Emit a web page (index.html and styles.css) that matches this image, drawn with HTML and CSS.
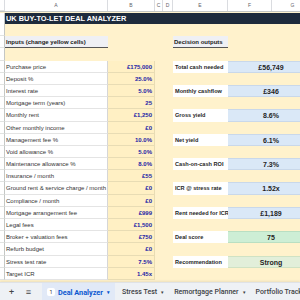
FILE: index.html
```html
<!DOCTYPE html>
<html lang="en">
<head>
    <meta charset="UTF-8">
    <title>UK Buy-to-Let Deal Analyzer</title>
    <link rel="stylesheet" href="styles.css">
</head>
<body>
    <div class="sheet">
        <div class="row col-head">
            <div class="c stub"></div>
            <div class="c">A</div>
            <div class="c">B</div>
            <div class="c">C</div>
            <div class="c">D</div>
            <div class="c">E</div>
            <div class="c split"><span>F</span><span>G</span></div>
        </div>

        <div class="row title-row">
            <div class="c stub"></div>
            <div class="c title">UK BUY-TO-LET DEAL ANALYZER</div>
        </div>

        <div class="row"><div class="c stub"></div></div>

        <div class="row">
            <div class="c stub"></div>
            <div class="c section">Inputs (change yellow cells)</div>
            <div class="c"></div>
            <div class="c"></div>
            <div class="c"></div>
            <div class="c section">Decision outputs</div>
        </div>

        <div class="row"><div class="c stub"></div></div>

        <div id="rows"></div>
    </div>

    <div class="tabs">
        <span class="tab-icon">+</span>
        <span class="tab-icon menu">&#8801;</span>
        <div class="tab active"><span class="badge">1</span>Deal Analyzer<span class="caret">&#9662;</span></div>
        <div class="tab">Stress Test<span class="caret">&#9662;</span></div>
        <div class="tab">Remortgage Planner<span class="caret">&#9662;</span></div>
        <div class="tab">Portfolio Tracker</div>
    </div>

    <script>
        const inputs = [
            ['Purchase price', '£175,000'],
            ['Deposit %', '25.0%'],
            ['Interest rate', '5.0%'],
            ['Mortgage term (years)', '25'],
            ['Monthly rent', '£1,250'],
            ['Other monthly income', '£0'],
            ['Management fee %', '10.0%'],
            ['Void allowance %', '5.0%'],
            ['Maintenance allowance %', '8.0%'],
            ['Insurance / month', '£55'],
            ['Ground rent & service charge / month', '£0'],
            ['Compliance / month', '£0'],
            ['Mortgage arrangement fee', '£999'],
            ['Legal fees', '£1,500'],
            ['Broker + valuation fees', '£750'],
            ['Refurb budget', '£0'],
            ['Stress test rate', '7.5%'],
            ['Target ICR', '1.45x']
        ];

        const outputs = [
            ['Total cash needed', '£56,749', 'blue'],
            ['Monthly cashflow', '£346', 'blue'],
            ['Gross yield', '8.6%', 'blue'],
            ['Net yield', '6.1%', 'blue'],
            ['Cash-on-cash ROI', '7.3%', 'blue'],
            ['ICR @ stress rate', '1.52x', 'blue'],
            ['Rent needed for ICR', '£1,189', 'blue'],
            ['Deal score', '75', 'green'],
            ['Recommendation', 'Strong', 'pale']
        ];

        const rows = document.getElementById('rows');

        inputs.forEach((item, i) => {
            let right = '';
            if (i % 2 === 0 && outputs[i / 2]) {
                const out = outputs[i / 2];
                right = `
                    <div class="c out-label">${out[0]}</div>
                    <div class="c out-value ${out[2]}">${out[1]}</div>`;
            }
            rows.innerHTML += `
                <div class="row">
                    <div class="c stub"></div>
                    <div class="c label">${item[0]}</div>
                    <div class="c input">${item[1]}</div>
                    <div class="c"></div>
                    <div class="c"></div>
                    ${right}
                </div>`;
        });
    </script>
</body>
</html>
```

FILE: styles.css
```css
body {
    margin: 0;
    width: 300px;
    height: 300px;
    overflow: hidden;
    font-family: "Liberation Sans", Arial, sans-serif;
    background-color: #fff2cc;
}

.sheet {
    height: 282px;
    overflow: hidden;
}

.row {
    display: grid;
    grid-template-columns: 5px 103px 47px 8px 10px 55px 86px;
    height: 12.2px;
    width: 314px;
}

.c {
    box-sizing: border-box;
    font-size: 6px;
    line-height: 12.2px;
    white-space: nowrap;
    overflow: hidden;
}

.stub {
    background-color: #fff;
    border-right: 1px solid #c4c7c5;
    border-bottom: 1px solid #e1e3e1;
}

.col-head {
    height: 10.5px;
    background-color: #fff;
    border-bottom: 1px solid #c4c7c5;
}

.col-head .c {
    line-height: 10px;
    font-size: 5px;
    color: #5f6368;
    text-align: center;
    border-right: 1px solid #dadce0;
}

.col-head .split {
    display: flex;
    border-right: none;
}

.col-head .split span {
    width: 44px;
    border-right: 1px solid #dadce0;
}

.col-head .split span + span {
    width: 42px;
}

.title-row {
    background-color: #1e2b3c;
    height: 11.5px;
    margin-top: 1px;
}

.title-row .stub {
    border-bottom: none;
}

.title {
    grid-column: 2 / 8;
    color: #fff;
    font-weight: bold;
    font-size: 7.4px;
    line-height: 11.5px;
    padding-left: 1px;
}

.section {
    background-color: #eff0f4;
    border-bottom: 1px solid #555;
    font-weight: bold;
    color: #222;
    padding-left: 1px;
    line-height: 12px;
}

.label {
    background-color: #fff;
    color: #333;
    padding-left: 1px;
    border-bottom: 1px solid #e4e4e4;
    border-right: 1px solid #d6d6d6;
    line-height: 12.6px;
}

.input {
    background-color: #fff0c4;
    color: #2323a6;
    font-weight: bold;
    text-align: right;
    padding-right: 2px;
    border-bottom: 1px solid #e8dcb4;
    border-right: 1px solid #e8dcb4;
    line-height: 12.6px;
}

.out-label {
    background-color: #fff;
    color: #1f1f1f;
    font-weight: bold;
    font-size: 5.6px;
    padding-left: 2px;
    line-height: 13px;
}

.out-value {
    color: #1f1f1f;
    font-weight: bold;
    font-size: 7px;
    text-align: center;
    line-height: 12.6px;
    border-top: 1px solid #c9d8ea;
    border-bottom: 1px solid #c9d8ea;
}

.blue {
    background-color: #dae8f7;
}

.green {
    background-color: #cdeed5;
    border-color: #b9dfc2;
}

.pale {
    background-color: #e2efda;
    border-color: #cfe2c4;
}

.tabs {
    height: 18px;
    background-color: #eef1f5;
    border-top: 1px solid #dfe2e6;
    box-shadow: 0 -1px 2px rgba(0, 0, 0, 0.08);
    display: flex;
    align-items: center;
    font-family: Roboto, "Liberation Sans", sans-serif;
    font-size: 7px;
    color: #3c4043;
    overflow: hidden;
}

.tab-icon {
    flex-shrink: 0;
    width: 17px;
    text-align: center;
    font-size: 9px;
    color: #444;
}

.tab-icon:first-child {
    margin-left: 3px;
}

.tab {
    flex-shrink: 0;
    height: 18px;
    display: flex;
    align-items: center;
    padding: 0 5px;
    white-space: nowrap;
    font-weight: 500;
}

.tab.active {
    margin-left: 5px;
    margin-right: 2px;
    background-color: #e1e9f7;
    color: #0b57d0;
    font-weight: bold;
    font-size: 7.3px;
}

.badge {
    display: inline-block;
    width: 8px;
    height: 8px;
    line-height: 8px;
    border-radius: 2px;
    background-color: #fff;
    color: #333;
    font-size: 5.5px;
    font-weight: normal;
    text-align: center;
    margin-right: 3px;
}

.caret {
    font-size: 5px;
    margin-left: 4px;
}
```
